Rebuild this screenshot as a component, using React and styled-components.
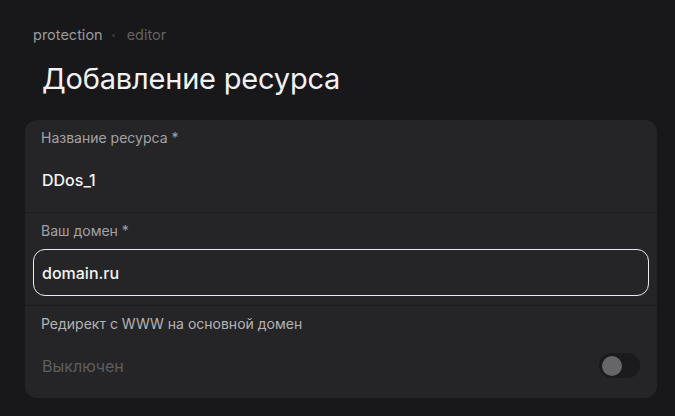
import React from "react";
import styled, { createGlobalStyle } from "styled-components";

const GlobalStyle = createGlobalStyle`
  html, body {
    margin: 0;
    padding: 0;
    background: #18181a;
  }
  body {
    font-family: Inter, "Noto Sans", sans-serif;
    -webkit-font-smoothing: antialiased;
  }
`;

const Page = styled.div`
  min-height: 416px;
  box-sizing: border-box;
  padding: 25px 18px 16px 25px;
  background: #18181a;
`;

const Crumbs = styled.div`
  display: flex;
  align-items: center;
  padding-left: 8px;
  font-size: 14.5px;
  line-height: 20px;
`;

const Crumb = styled.span`
  color: ${(p) => (p.$active ? "#9a9a9c" : "#626264")};
`;

const Dot = styled.span`
  width: 3px;
  height: 3px;
  margin: 0 12px 0 9px;
  border-radius: 50%;
  background: #3a3a3c;
`;

const Title = styled.h1`
  margin: 14px 0 0;
  padding-left: 17px;
  font-size: 29px;
  line-height: 40px;
  font-weight: 400;
  color: #f2f2f4;
  letter-spacing: -0.2px;
`;

const Card = styled.div`
  margin-top: 21px;
  background: #252527;
  border-radius: 12px;
  overflow: hidden;
`;

const Section = styled.div`
  display: flex;
  flex-direction: column;
  gap: 8px;
  padding: 8px 8px 9px;
  & + & {
    border-top: 1px solid #1c1c1e;
  }
`;

const Label = styled.div`
  padding-left: 8px;
  font-size: 14px;
  line-height: 20px;
  color: ${(p) => (p.$bright ? "#b4b4b6" : "#a2a2a4")};
`;

const Field = styled.div`
  display: flex;
  align-items: center;
  justify-content: space-between;
  height: 47px;
  box-sizing: border-box;
  padding: 0 8px;
  border-radius: 12px;
  border: 1px solid ${(p) => (p.$focused ? "#e8ecf4" : "transparent")};
  font-size: 16px;
  color: ${(p) => (p.$muted ? "#5e5e60" : "#f4f4f6")};
  font-weight: ${(p) => (p.$muted ? 400 : 500)};
`;

const Toggle = styled.div`
  width: 41px;
  height: 25px;
  border-radius: 13px;
  background: #1b1b1d;
  position: relative;
  &::after {
    content: "";
    position: absolute;
    left: 3px;
    top: 2.5px;
    width: 20px;
    height: 20px;
    border-radius: 50%;
    background: #666668;
  }
`;

export default function App() {
  return (
    <Page>
      <GlobalStyle />
      <Crumbs>
        <Crumb $active>protection</Crumb>
        <Dot />
        <Crumb>editor</Crumb>
      </Crumbs>
      <Title>Добавление ресурса</Title>
      <Card>
        <Section>
          <Label>Название ресурса *</Label>
          <Field>DDos_1</Field>
        </Section>
        <Section>
          <Label>Ваш домен *</Label>
          <Field $focused>domain.ru</Field>
        </Section>
        <Section>
          <Label $bright>Редирект с WWW на основной домен</Label>
          <Field $muted>
            Выключен
            <Toggle />
          </Field>
        </Section>
      </Card>
    </Page>
  );
}
